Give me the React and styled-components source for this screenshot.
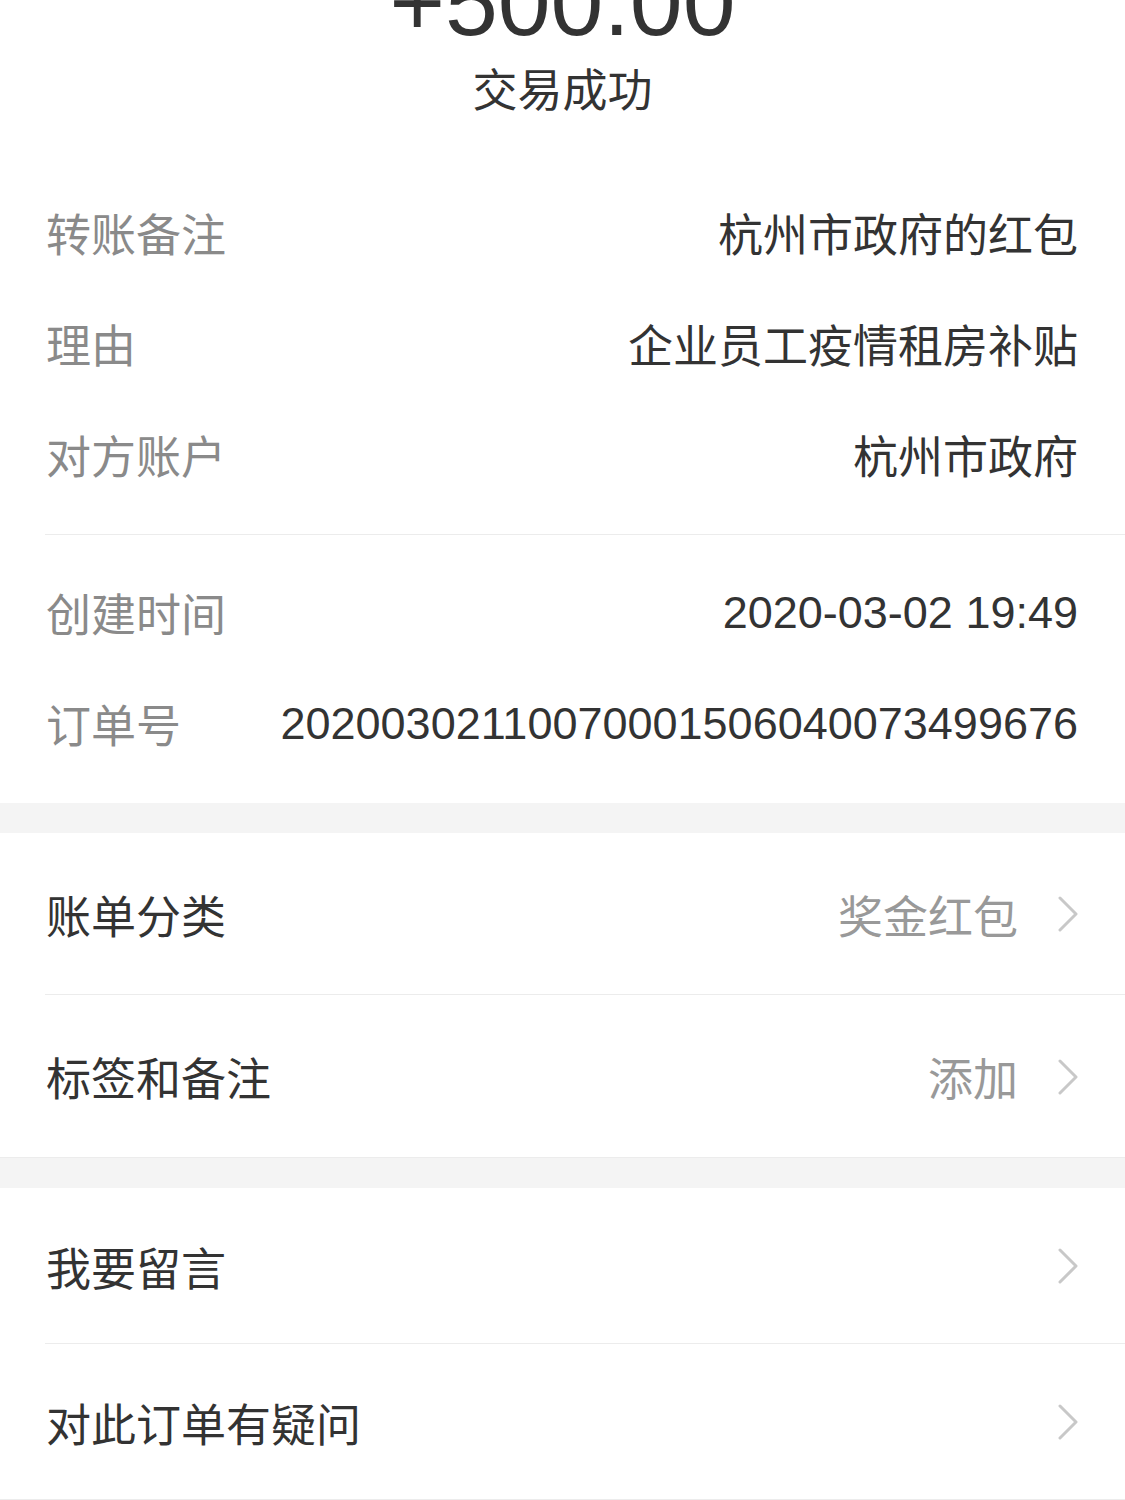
import React from 'react'
import styled, { createGlobalStyle } from 'styled-components';

const GlobalStyle = createGlobalStyle`
	html, body {
		margin: 0;
		padding: 0;
		background: #fff;
	}
	body {
		font-family: "Liberation Sans", "Noto Sans CJK SC", sans-serif;
		-webkit-font-smoothing: antialiased;
	}
`;

const Page = styled.div`
	width: 1125px;
	height: 1500px;
	overflow: hidden;
	background: #fff;
	color: #333;
`;

const Header = styled.div`
	display: flex;
	flex-direction: column;
	align-items: center;
	padding-bottom: 35px;
`;

const Amount = styled.div`
	margin-top: -46px;
	font-size: 95px;
	line-height: 96px;
	color: #333;
`;

const Status = styled.div`
	margin-top: 8px;
	font-family: "Noto Sans CJK SC", sans-serif;
	font-size: 45px;
	line-height: 60px;
	color: #333;
`;

const Group = styled.div`
	padding: ${p => p.$top || 24}px 0 24px;
`;

const Divider = styled.div`
	margin-left: 45px;
	height: 1px;
	background: #ececec;
`;

const InfoRow = styled.div`
	height: 111px;
	display: flex;
	align-items: center;
	justify-content: space-between;
	padding: 0 47px 0 46px;
`;

const Label = styled.span`
	font-family: "Noto Sans CJK SC", sans-serif;
	font-size: 45px;
	color: #8a8a8a;
	white-space: nowrap;
`;

const Value = styled.span`
	font-family: ${p => p.$num ? '"Liberation Sans", sans-serif' : '"Noto Sans CJK SC", sans-serif'};
	font-size: 45px;
	color: #333;
	white-space: nowrap;
`;

const Gap = styled.div`
	height: 30px;
	background: #f4f4f4;
`;

const NavRow = styled.div`
	height: ${p => p.$h}px;
	box-sizing: border-box;
	display: flex;
	align-items: center;
	padding: 0 47px 0 46px;
	position: relative;
	&::after {
		content: '';
		position: absolute;
		left: ${p => p.$fullLine ? 0 : 45}px;
		right: 0;
		bottom: 0;
		height: 1px;
		background: #ececec;
	}
`;

const NavTitle = styled.span`
	flex: 1;
	font-family: "Noto Sans CJK SC", sans-serif;
	font-size: 45px;
	color: #333;
`;

const NavValue = styled.span`
	font-family: "Noto Sans CJK SC", sans-serif;
	font-size: 45px;
	color: #999;
	margin-right: 40px;
`;

const Chevron = () => (
	<svg width="20" height="36" viewBox="0 0 20 36">
		<polyline points="2,2 18,18 2,34" fill="none" stroke="#c8c8c8" strokeWidth="3" strokeLinecap="round" strokeLinejoin="round" />
	</svg>
);

const info1 = [
	['转账备注', '杭州市政府的红包'],
	['理由', '企业员工疫情租房补贴'],
	['对方账户', '杭州市政府'],
];

const App = () => {
	return (
		<Page>
			<GlobalStyle />
			<Header>
				<Amount>+500.00</Amount>
				<Status>交易成功</Status>
			</Header>

			<Group>
				{info1.map(([k, v]) => (
					<InfoRow key={k}>
						<Label>{k}</Label>
						<Value>{v}</Value>
					</InfoRow>
				))}
			</Group>
			<Divider />
			<Group $top={22}>
				<InfoRow>
					<Label>创建时间</Label>
					<Value $num>2020-03-02 19:49</Value>
				</InfoRow>
				<InfoRow>
					<Label>订单号</Label>
					<Value $num>20200302110070001506040073499676</Value>
				</InfoRow>
			</Group>

			<Gap />
			<NavRow $h={162}>
				<NavTitle>账单分类</NavTitle>
				<NavValue>奖金红包</NavValue>
				<Chevron />
			</NavRow>
			<NavRow $h={163} $fullLine>
				<NavTitle>标签和备注</NavTitle>
				<NavValue>添加</NavValue>
				<Chevron />
			</NavRow>

			<Gap />
			<NavRow $h={156}>
				<NavTitle>我要留言</NavTitle>
				<Chevron />
			</NavRow>
			<NavRow $h={156} $fullLine>
				<NavTitle>对此订单有疑问</NavTitle>
				<Chevron />
			</NavRow>
		</Page>
	)
}

export default App;
